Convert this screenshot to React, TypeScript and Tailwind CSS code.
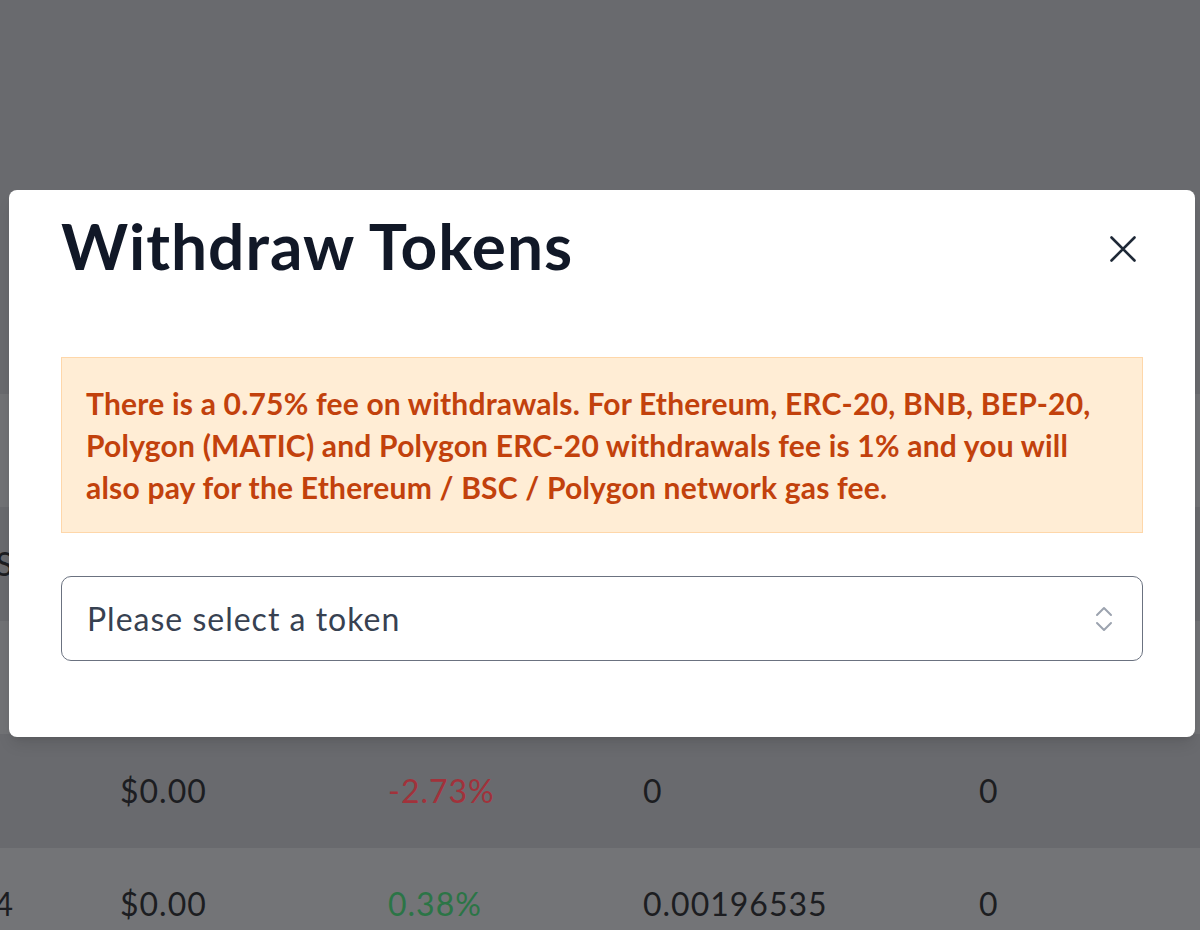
import React from "react";

const font = { fontFamily: "Lato, 'Noto Sans', sans-serif" };

function Row({ bg, cells }: { bg: string; cells: React.ReactNode[] }) {
  return (
    <div className={`flex h-[113.5px] items-center text-[32px] tracking-[1px] text-[#1c1d21] ${bg}`}>
      <div className="flex w-[120px] shrink-0 justify-end overflow-visible whitespace-nowrap pr-[106px]">{cells[0]}</div>
      <div className="w-[268px] shrink-0">{cells[1]}</div>
      <div className="w-[255px] shrink-0">{cells[2]}</div>
      <div className="w-[336px] shrink-0">{cells[3]}</div>
      <div className="flex-1">{cells[4]}</div>
    </div>
  );
}

export default function App() {
  return (
    <div className="relative h-[930px] w-[1200px] overflow-hidden bg-[#696a6e]" style={font}>
      <div className="flex flex-col pt-[280px]">
        <Row bg="bg-[#696a6e]" cells={["", "", "", "", ""]} />
        <Row bg="bg-[#717275]" cells={["", "", "", "", ""]} />
        <Row bg="bg-[#696a6e]" cells={["ETHS", "", "", "", ""]} />
        <Row bg="bg-[#717275]" cells={["", "", "", "", ""]} />
        <Row
          bg="bg-[#696a6e]"
          cells={["", "$0.00", <span className="text-[#a1323b]">-2.73%</span>, "0", "0"]}
        />
        <Row
          bg="bg-[#737477]"
          cells={["0.00091234", "$0.00", <span className="text-[#2b7546]">0.38%</span>, "0.00196535", "0"]}
        />
      </div>

      <div className="absolute left-[9px] top-[190px] h-[547px] w-[1186px] rounded-[8px] bg-white px-[52px] pt-[24px] shadow-lg">
        <div className="flex h-[64px] items-center justify-between">
          <h2 className="text-[64px] font-bold leading-[64px] tracking-[1px] text-[#111827]">Withdraw Tokens</h2>
          <button className="mr-[7px] mt-[6px] flex h-[26px] w-[26px] items-center justify-center">
            <svg width="26" height="26" viewBox="0 0 26 26" fill="none" stroke="#1f2937" strokeWidth="2.6" strokeLinecap="round">
              <path d="M1.5 1.5L24.5 24.5M24.5 1.5L1.5 24.5" />
            </svg>
          </button>
        </div>

        <div className="mt-[79px] border border-[#fed7aa] bg-[#ffedd5] px-[24px] py-[24px] text-[30px] font-bold leading-[42px] tracking-[0.2px] text-[#c2410c]">
          There is a 0.75% fee on withdrawals. For Ethereum, ERC-20, BNB, BEP-20,
          <br />
          Polygon (MATIC) and Polygon ERC-20 withdrawals fee is 1% and you will
          <br />
          also pay for the Ethereum / BSC / Polygon network gas fee.
        </div>

        <div className="mt-[43px] flex h-[85px] items-center justify-between rounded-[10px] border-[1.5px] border-[#6b7280] pl-[25px] pr-[29px]">
          <span className="text-[32px] tracking-[1px] text-[#374151]">Please select a token</span>
          <svg width="18" height="30" viewBox="0 0 18 30" fill="none" stroke="#9ca3af" strokeWidth="2" strokeLinecap="round" strokeLinejoin="round">
            <path d="M2 11L9 4L16 11" />
            <path d="M2 19L9 26L16 19" />
          </svg>
        </div>
      </div>
    </div>
  );
}
